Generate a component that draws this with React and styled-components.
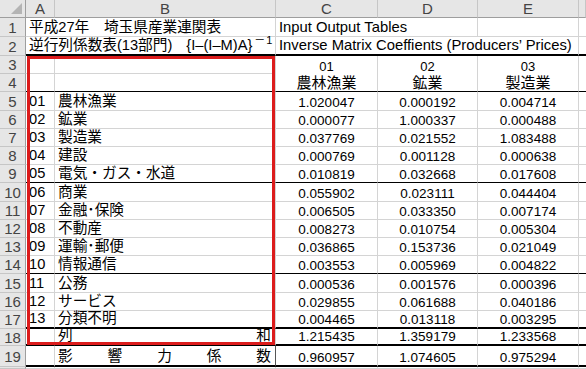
import React from 'react';
import styled, { createGlobalStyle } from 'styled-components';

const GlobalStyle = createGlobalStyle`
  html, body {
    margin: 0;
    padding: 0;
    background: #fff;
  }
  body {
    font-family: 'Liberation Sans', 'Noto Sans CJK JP', sans-serif;
  }
`;

const sectors = [
  ['01', '農林漁業', '1.020047', '0.000192', '0.004714'],
  ['02', '鉱業', '0.000077', '1.000337', '0.000488'],
  ['03', '製造業', '0.037769', '0.021552', '1.083488'],
  ['04', '建設', '0.000769', '0.001128', '0.000638'],
  ['05', '電気・ガス・水道', '0.010819', '0.032668', '0.017608'],
  ['06', '商業', '0.055902', '0.023111', '0.044404'],
  ['07', '金融･保険', '0.006505', '0.033350', '0.007174'],
  ['08', '不動産', '0.008273', '0.010754', '0.005304'],
  ['09', '運輸･郵便', '0.036865', '0.153736', '0.021049'],
  ['10', '情報通信', '0.003553', '0.005969', '0.004822'],
  ['11', '公務', '0.000536', '0.001576', '0.000396'],
  ['12', 'サービス', '0.029855', '0.061688', '0.040186'],
  ['13', '分類不明', '0.004465', '0.013118', '0.003295'],
];

// bottom border of data rows 5..17 (index in sectors)
const groupEnd = { 4: 'thin', 9: 'thin', 12: 'thick' };
const heights5to17 = [19, 18, 18, 18, 18, 19, 18, 18, 18, 18, 19, 18, 18];

const borders = {
  grid: '1px solid #d4d4d4',
  thin: '1px solid #000',
  thick: '2px solid #000',
  dark: '1px solid #555',
  none: '0 solid transparent',
};

const Sheet = styled.div`
  position: relative;
  width: 586px;
  height: 369px;
  overflow: hidden;
  display: grid;
  grid-template-columns: 26px 29px 221px 102px 100px 101px 7px;
  grid-template-rows: 18px 19px 19px 18px 18px ${heights5to17.map((h) => h + 'px').join(' ')} 17px 21px 1fr;
`;

const Corner = styled.div`
  background: #e6e6e6;
  border-right: 1px solid #9e9e9e;
  border-bottom: 1px solid #9e9e9e;
  box-sizing: border-box;
  position: relative;

  &::after {
    content: '';
    position: absolute;
    right: 3px;
    bottom: 3px;
    border-style: solid;
    border-width: 0 0 11px 11px;
    border-color: transparent transparent #b4b4b4 transparent;
  }
`;

const ColHead = styled.div`
  background: #e6e6e6;
  border-right: 1px solid #c6c6c6;
  border-bottom: 1px solid #9e9e9e;
  box-sizing: border-box;
  display: flex;
  align-items: center;
  justify-content: center;
  color: #444;
  font-size: 15px;
`;

const RowHead = styled.div`
  background: #e6e6e6;
  border-right: 1px solid #9e9e9e;
  border-bottom: 1px solid #c6c6c6;
  box-sizing: border-box;
  display: flex;
  align-items: center;
  justify-content: center;
  color: #444;
  font-size: 15px;
`;

const Cell = styled.div`
  grid-column: span ${(p) => p.$span || 1};
  box-sizing: border-box;
  border-right: ${(p) => borders[p.$r || 'grid']};
  border-bottom: ${(p) => borders[p.$b || 'grid']};
  display: flex;
  align-items: flex-end;
  justify-content: ${(p) =>
    p.$align === 'center' ? 'center' : p.$align === 'between' ? 'space-between' : 'flex-start'};
  padding: 0 ${(p) => (p.$align === 'between' ? '4px 1px 3px' : '3px 1px')};
  white-space: nowrap;
  overflow: visible;
  font-size: ${(p) => p.$size || 14.67}px;
  color: #000;
  line-height: 1;
`;

const Title = styled.span`
  font-size: 14.67px;
`;

const Formula = styled.span`
  font-family: 'Liberation Sans', sans-serif;
  margin-left: 14px;
`;

const English = styled.span`
  font-size: 14.8px;
`;

const Sup = styled.span`
  font-size: 11px;
  letter-spacing: 1px;
  position: relative;
  top: -6px;
  margin-left: 2px;
`;

const Num = styled.span`
  font-size: 13.5px;
`;

const RedFrame = styled.div`
  position: absolute;
  left: 27px;
  top: 56px;
  width: 248px;
  height: 289px;
  border: 3px solid #dc1c1c;
  box-sizing: border-box;
  pointer-events: none;
`;

const cols = ['A', 'B', 'C', 'D', 'E', ''];

export default function App() {
  return (
    <>
      <GlobalStyle />
      <Sheet>
        <Corner />
        {cols.map((c, i) => (
          <ColHead key={i}>{c}</ColHead>
        ))}

        {/* row 1 */}
        <RowHead>1</RowHead>
        <Cell $span={2}>
          <Title>平成27年　埼玉県産業連関表</Title>
        </Cell>
        <Cell $span={2} $r="grid">
          <English>Input Output Tables</English>
        </Cell>
        <Cell />
        <Cell $r="none" />

        {/* row 2 */}
        <RowHead>2</RowHead>
        <Cell $span={2} $b="thick">
          <Title>
            {'逆行列係数表(13部門)'}
            <Formula>{'{I–(I–M)A}'}</Formula>
            <Sup>－1</Sup>
          </Title>
        </Cell>
        <Cell $span={3} $b="thick">
          <English>Inverse Matrix Coeffients (Producers’ Prices)</English>
        </Cell>
        <Cell $r="none" $b="thick" />

        {/* row 3 */}
        <RowHead>3</RowHead>
        <Cell />
        <Cell />
        <Cell $align="center" $b="none" $size={13}>01</Cell>
        <Cell $align="center" $b="none" $size={13}>02</Cell>
        <Cell $align="center" $b="none" $size={13}>03</Cell>
        <Cell $r="none" $b="none" />

        {/* row 4 */}
        <RowHead>4</RowHead>
        <Cell $b="thin" />
        <Cell $b="thin" />
        <Cell $align="center" $b="thin" $size={15}>農林漁業</Cell>
        <Cell $align="center" $b="thin" $size={15}>鉱業</Cell>
        <Cell $align="center" $b="thin" $size={15}>製造業</Cell>
        <Cell $r="none" $b="thin" />

        {sectors.map(([code, name, c, d, e], i) => {
          const b = groupEnd[i] || 'grid';
          return (
            <React.Fragment key={code}>
              <RowHead>{i + 5}</RowHead>
              <Cell $b={b}>{code}</Cell>
              <Cell $b={b}>{name}</Cell>
              <Cell $b={b} $align="center"><Num>{c}</Num></Cell>
              <Cell $b={b} $align="center"><Num>{d}</Num></Cell>
              <Cell $b={b} $align="center"><Num>{e}</Num></Cell>
              <Cell $b={b} $r="none" />
            </React.Fragment>
          );
        })}

        {/* row 18 */}
        <RowHead>18</RowHead>
        <Cell $b="thick" />
        <Cell $b="thick" $align="between">
          <span>列</span>
          <span>和</span>
        </Cell>
        <Cell $b="thick" $align="center"><Num>1.215435</Num></Cell>
        <Cell $b="thick" $align="center"><Num>1.359179</Num></Cell>
        <Cell $b="thick" $align="center"><Num>1.233568</Num></Cell>
        <Cell $b="thick" $r="none" />

        {/* row 19 */}
        <RowHead>19</RowHead>
        <Cell $b="thick" />
        <Cell $b="thick" $r="dark" $align="between">
          <span>影</span>
          <span>響</span>
          <span>力</span>
          <span>係</span>
          <span>数</span>
        </Cell>
        <Cell $b="thick" $align="center"><Num>0.960957</Num></Cell>
        <Cell $b="thick" $align="center"><Num>1.074605</Num></Cell>
        <Cell $b="thick" $align="center"><Num>0.975294</Num></Cell>
        <Cell $b="thick" $r="none" />

        {/* partial row 20 */}
        <RowHead />
        <Cell />
        <Cell />
        <Cell />
        <Cell />
        <Cell />
        <Cell $r="none" />

        <RedFrame />
      </Sheet>
    </>
  );
}
